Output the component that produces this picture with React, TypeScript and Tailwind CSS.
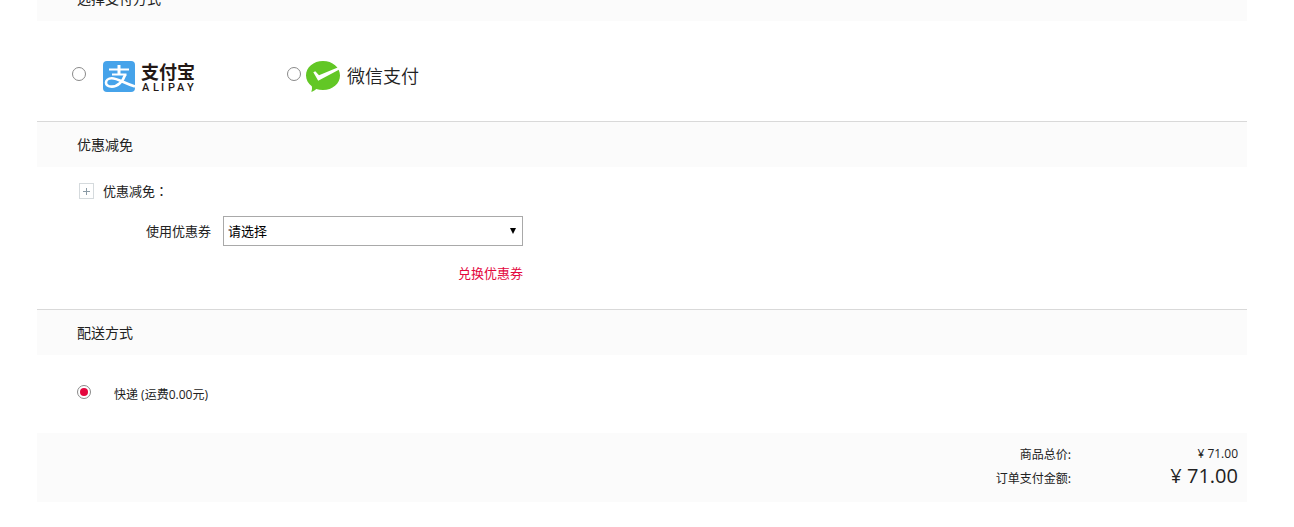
import { useState } from 'react'
import type { ReactNode } from 'react'

interface SectionProps {
  title: string
  children: ReactNode
}

interface RadioProps {
  name: string
  value: string
  label?: string
  checked: boolean
  onChange: () => void
}

function Section({ title, children }: SectionProps) {
  return (
    <section>
      <h2 className="border-t border-[#d9d9d9] bg-[#fbfbfb] pl-10 text-sm leading-[45px]">{title}</h2>
      {children}
    </section>
  )
}

function Radio({ name, value, label, checked, onChange }: RadioProps) {
  return (
    <input
      type="radio"
      id={`${name}-${value}`}
      name={name}
      value={value}
      aria-label={label}
      checked={checked}
      onChange={onChange}
      className="h-3.5 w-3.5 shrink-0 appearance-none rounded-full border border-[#8a8a8a] bg-white bg-clip-content p-0.5 checked:bg-[#e4073e]"
    />
  )
}

function AlipayLogo() {
  return (
    <svg className="overflow-visible" width="94" height="32" viewBox="0 0 94 32" aria-hidden="true">
      <rect width="32" height="31" rx="4" fill="#46a3ea" />
      <g fill="none" stroke="#fff" strokeLinecap="butt">
        <path d="M6 8.5H26M9 13.5H23.500" strokeWidth="2" />
        <path d="M16 4V13.500" strokeWidth="3" />
        <path
          d="M22.300 13.500C20 20.500 14.500 25.600 8.800 25.600C5 25.600 3 24 3 21.700C3 19.400 5.200 17.300 8.700 17.300C14.500 17.300 20 21.600 32 25.600"
          strokeWidth="2.600"
        />
      </g>
      <text x="38" y="18" fontSize="18" fontWeight="700" fill="#231815">
        支付宝
      </text>
      <text
        x="39 50 58 65 74 84"
        y="30"
        fontSize="11"
        fontWeight="500"
        fill="#231815"
        fontFamily="Roboto, sans-serif"
      >
        ALIPAY
      </text>
    </svg>
  )
}

function WechatPayLogo() {
  return (
    <svg width="114" height="32" viewBox="0 0 114 32" aria-hidden="true">
      <path
        d="M17 0C26.5 0 34 6.3 34 14.5S26.5 29 17 29C14.600 29 12.300 28.600 10.200 27.900C8.800 29.300 7 30.500 5.200 30.800C6 29.300 6.200 27 5.800 25.200C2.200 22.600 0 18.800 0 14.500C0 6.300 7.500 0 17 0Z"
        fill="#62c725"
      />
      <path d="M7.300 11.200L9.300 10.200L13 14.300L32.300 6.300L33.800 8.300L12.200 19.800Z" fill="#fff" />
      <text x="41" y="22" fontSize="18" fontWeight="350" fill="#222">
        微信支付
      </text>
    </svg>
  )
}

export default function App() {
  const [payment, setPayment] = useState('')
  const [shipping, setShipping] = useState('express')
  const [expanded, setExpanded] = useState(true)

  return (
    <main className="overflow-hidden pr-[47px] pb-6 pl-[37px] font-['Noto_Sans_CJK_SC',sans-serif] text-[#222]">
      <div className="-mt-[25px]">
        <Section title="选择支付方式">
          <div className="flex items-start pt-10 pb-7 pl-[35px]">
            <label className="flex w-[215px] items-start">
              <span className="mt-1.5 mr-[17px] flex">
                <Radio
                  name="payment"
                  value="alipay"
                  label="支付宝"
                  checked={payment === 'alipay'}
                  onChange={() => setPayment('alipay')}
                />
              </span>
              <AlipayLogo />
            </label>
            <label className="flex items-start">
              <span className="mt-1.5 mr-[5px] flex">
                <Radio
                  name="payment"
                  value="wechat"
                  label="微信支付"
                  checked={payment === 'wechat'}
                  onChange={() => setPayment('wechat')}
                />
              </span>
              <WechatPayLogo />
            </label>
          </div>
        </Section>

        <Section title="优惠减免">
          <div className="pt-4 pb-[26px] pl-[42px] text-[13px]">
            <div className="flex h-4 items-center">
              <button
                type="button"
                aria-label="展开优惠减免"
                aria-expanded={expanded}
                onClick={() => setExpanded(!expanded)}
                className="flex h-4 w-[15px] items-center justify-center border border-[#d5dadd]"
              >
                <svg width="7" height="7" viewBox="0 0 7 7" stroke="#8a9aa5">
                  <path d="M0 3.500H7M3.500 0V7" />
                </svg>
              </button>
              <span className="ml-[9px] leading-4">
                优惠减免<span className="font-['Noto_Sans_CJK_TC',sans-serif]">：</span>
              </span>
            </div>

            {expanded && (
              <div className="mt-[17px] w-[444px] max-w-full">
                <div className="flex items-center justify-end">
                  <label htmlFor="coupon" className="mr-3">
                    使用优惠券
                  </label>
                  <div className="relative w-[300px]">
                    <select
                      id="coupon"
                      className="block h-[30px] w-full appearance-none border border-[#a9a9a9] bg-white pl-1 text-black"
                    >
                      <option>请选择</option>
                    </select>
                    <svg
                      className="pointer-events-none absolute top-3 right-[7px]"
                      width="6"
                      height="6"
                      viewBox="0 0 6 6"
                    >
                      <path d="M0 0H6L3 6Z" fill="#000" />
                    </svg>
                  </div>
                </div>
                <div className="mt-[17px] text-right leading-5">
                  <a href="#coupon" className="text-[#e4073e]">
                    兑换优惠券
                  </a>
                </div>
              </div>
            )}
          </div>
        </Section>

        <Section title="配送方式">
          <div className="flex items-start pt-[30px] pb-7 pl-10">
            <Radio
              name="shipping"
              value="express"
              checked={shipping === 'express'}
              onChange={() => setShipping('express')}
            />
            <label
              htmlFor="shipping-express"
              className="ml-[23px] font-['Open_Sans','Noto_Sans_CJK_SC',sans-serif] text-xs leading-5"
            >
              快递 (运费0.00元)
            </label>
          </div>
        </Section>

        {/* Order total */}
        <dl className="bg-[#fbfbfb] pt-[9px] pr-[9px] pb-3 text-xs">
          <div className="flex h-6 items-center justify-end">
            <dt>商品总价:</dt>
            <dd className="w-[167px] text-right font-['Open_Sans','Noto_Sans_CJK_SC',sans-serif]">¥ 71.00</dd>
          </div>
          <div className="flex h-6 items-start justify-end">
            <dt className="leading-6">订单支付金额:</dt>
            <dd className="w-[167px] text-right font-['Open_Sans','Noto_Sans_CJK_SC',sans-serif] text-xl leading-5">
              ¥ 71.00
            </dd>
          </div>
        </dl>
      </div>
    </main>
  )
}
